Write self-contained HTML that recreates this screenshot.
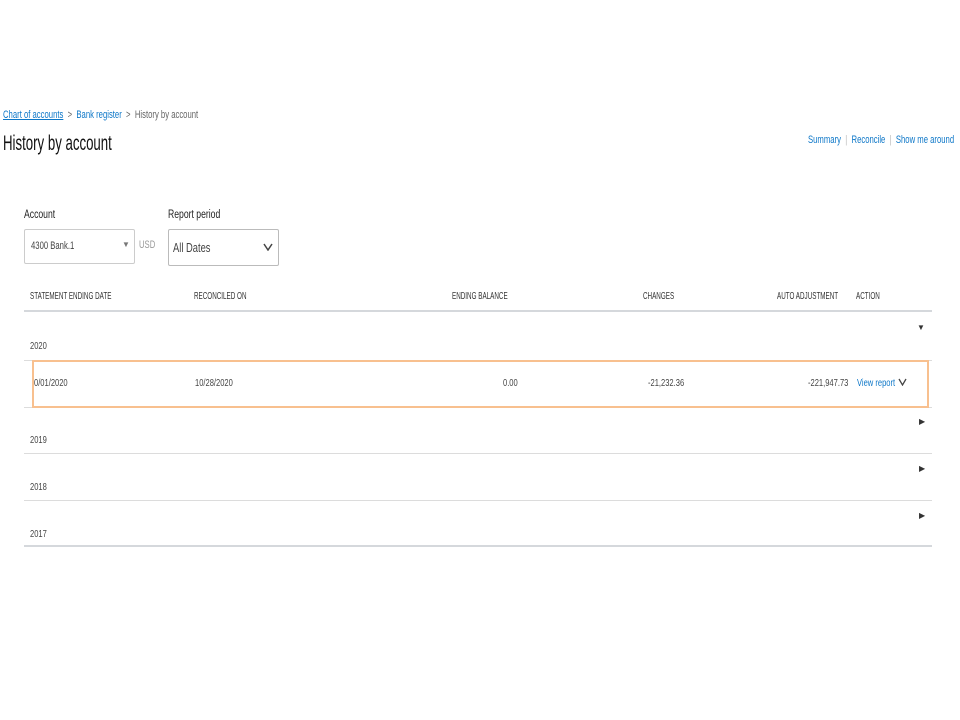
<!DOCTYPE html>
<html><head><style>
body{margin:0;width:960px;height:720px;background:#fff;font-family:"Liberation Sans",sans-serif;position:relative;overflow:hidden;color:#333}
.a{position:absolute;white-space:nowrap;transform-origin:0 0}
.n{transform:scaleX(.7)}
.blue{color:#0d77c8}
.line{position:absolute;left:24px;width:908px;height:1px;background:#dcdcdc}
.th{font-size:10px;color:#333;transform:scaleX(.63)}
.td{font-size:10.5px;color:#444;transform:scaleX(.72)}
</style></head><body>
<div class="a n" style="left:3px;top:109px;font-size:11px;color:#666"><span class="blue" style="text-decoration:underline">Chart of accounts</span> &nbsp;&gt;&nbsp; <span class="blue">Bank register</span> &nbsp;&gt;&nbsp; History by account</div>
<div class="a" style="left:3px;top:132px;font-size:21px;color:#111;transform:scaleX(.63)">History by account</div>
<div class="a" style="left:808px;top:134px;font-size:11px;color:#0d77c8;transform:scaleX(.7)">Summary &nbsp;<span style="color:#bbb">|</span>&nbsp; Reconcile &nbsp;<span style="color:#bbb">|</span>&nbsp; Show me around</div>
<div class="a" style="left:24px;top:209px;font-size:11.5px;color:#222;transform:scaleX(.75)">Account</div>
<div class="a" style="left:168px;top:209px;font-size:11.5px;color:#222;transform:scaleX(.75)">Report period</div>
<div class="a" style="left:24px;top:229px;width:109px;height:33px;border:1px solid #ccc;border-radius:2px"></div>
<div class="a n" style="left:31px;top:240px;font-size:11px;color:#444">4300 Bank.1</div>
<div class="a" style="left:122px;top:240px;font-size:8px;color:#777">▼</div>
<div class="a n" style="left:139px;top:239px;font-size:11px;color:#999">USD</div>
<div class="a" style="left:168px;top:229px;width:109px;height:35px;border:1px solid #bbb;border-radius:2px"></div>
<div class="a" style="left:173px;top:240px;font-size:13px;color:#444;transform:scaleX(.72)">All Dates</div>
<svg class="a" style="left:263px;top:243px" width="10" height="8"><path d="M1 1L5 7L9 1" fill="none" stroke="#444" stroke-width="1.5"/></svg>
<div class="a th" style="left:30px;top:291px">STATEMENT ENDING DATE</div>
<div class="a th" style="left:194px;top:291px">RECONCILED ON</div>
<div class="a th" style="left:452px;top:291px">ENDING BALANCE</div>
<div class="a th" style="left:643px;top:291px">CHANGES</div>
<div class="a th" style="left:777px;top:291px">AUTO ADJUSTMENT</div>
<div class="a th" style="left:856px;top:291px">ACTION</div>
<div class="line" style="top:310px;height:2px;background:#d5d8dc"></div>
<div class="a" style="left:917px;top:323px;font-size:8px;color:#333">▼</div>
<div class="a td" style="left:30px;top:340px">2020</div>
<div class="line" style="top:360px"></div>
<div class="a td" style="left:34px;top:377px">0/01/2020</div>
<div class="a td" style="left:195px;top:377px">10/28/2020</div>
<div class="a td" style="left:503px;top:377px">0.00</div>
<div class="a td" style="left:648px;top:377px">-21,232.36</div>
<div class="a td" style="left:808px;top:377px">-221,947.73</div>
<div class="a td" style="left:857px;top:377px;color:#0d77c8">View report</div>
<svg class="a" style="left:898px;top:378px" width="9" height="8"><path d="M1 1L4.5 7L8 1" fill="none" stroke="#444" stroke-width="1.3"/></svg>
<div class="line" style="top:407px"></div>
<div class="a" style="left:32px;top:360px;width:893px;height:44px;border:2px solid #f8c08f"></div>
<div class="a" style="left:919px;top:417px;font-size:8px;color:#333">▶</div>
<div class="a td" style="left:30px;top:434px">2019</div>
<div class="line" style="top:453px"></div>
<div class="a" style="left:919px;top:464px;font-size:8px;color:#333">▶</div>
<div class="a td" style="left:30px;top:481px">2018</div>
<div class="line" style="top:500px"></div>
<div class="a" style="left:919px;top:511px;font-size:8px;color:#333">▶</div>
<div class="a td" style="left:30px;top:528px">2017</div>
<div class="line" style="top:545px;height:2px;background:#d5d8dc"></div>
</body></html>
